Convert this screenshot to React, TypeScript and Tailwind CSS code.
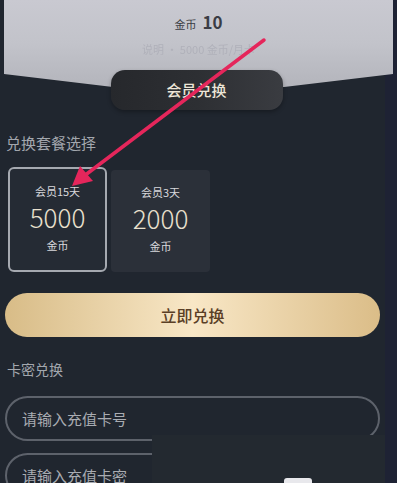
const plans = [
  { name: '会员15天', price: '5000', selected: true },
  { name: '会员3天', price: '2000', selected: false },
]

const App = () => {
  return (
    <div
      className="relative h-[483px] w-full overflow-hidden bg-[#20262f] text-white"
      style={{ fontFamily: '"Noto Sans CJK SC", "Noto Sans", sans-serif' }}
    >
      <div className="absolute inset-y-0 right-0 w-[12px] bg-[#1e2234]" />

      <section className="relative">
        <div className="mx-[4px] h-[88px] bg-gradient-to-b from-[#c9c9d1] via-[#c2c3ca] to-[#b3b4bb] [clip-path:polygon(0_0,100%_0,100%_74px,72%_87px,28%_87px,0_74px)]">
          <div className="flex flex-col items-center pt-[9px]">
            <p className="flex items-baseline gap-[6px] text-[#3a3c44]">
              <span className="text-[11px]">金币</span>
              <span className="text-[17px] font-bold">10</span>
            </p>
            <p className="mt-[6px] text-[11px] text-[#b0b1ba] blur-[0.6px]">说明 · 5000 金币/月卡</p>
          </div>
        </div>
        <div className="relative -mt-[18px] flex justify-center pr-[4px]">
          <div className="flex h-[40px] w-[172px] items-center justify-center rounded-[14px] bg-gradient-to-r from-[#26282c] via-[#2d2f33] to-[#3a3c41] shadow-[0_2px_4px_rgba(0,0,0,0.3)]">
            <span className="text-[15px] font-medium text-[#ede6d8]">会员兑换</span>
          </div>
        </div>
      </section>

      <section className="px-[6px] pt-[22px]">
        <h2 className="text-[15px] text-[#a3a7ae]">兑换套餐选择</h2>
        <div className="mt-[12px] flex gap-[4px] pl-[2px]">
          {plans.map((plan) => (
            <div
              key={plan.price}
              className={
                plan.selected
                  ? 'flex h-[105px] w-[99px] flex-col items-center rounded-[6px] border-2 border-[#a5a9b0] bg-[#252b34] pt-[14px]'
                  : 'mt-[3px] flex h-[102px] w-[99px] flex-col items-center rounded-[4px] bg-[#2b3039] pt-[14px]'
              }
            >
              <span className="text-[11px] text-[#d8d8dc]">{plan.name}</span>
              <span className="mt-[1px] text-[26px] font-light leading-[34px] text-[#e9e0cd]">{plan.price}</span>
              <span className="mt-[3px] text-[11px] text-[#d8d8dc]">金币</span>
            </div>
          ))}
        </div>
      </section>

      <div className="px-[5px] pr-[17px] pt-[21px]">
        <button
          type="button"
          className="flex h-[44px] w-full items-center justify-center rounded-full bg-gradient-to-r from-[#d8bc87] via-[#f8e7c6] to-[#dbbd88] text-[16px] font-medium text-[#5b4026]"
        >
          立即兑换
        </button>
      </div>

      <section className="px-[5px] pr-[17px] pt-[22px]">
        <h2 className="pl-[2px] text-[14px] text-[#a3a7ae]">卡密兑换</h2>
        <div className="mt-[16px] flex flex-col gap-[12px]">
          <input
            placeholder="请输入充值卡号"
            className="h-[45px] w-full rounded-full border-2 border-[#5d626b] bg-transparent px-[15px] text-[15px] text-white placeholder:text-[#a9acb2] focus:outline-none"
          />
          <input
            placeholder="请输入充值卡密"
            className="h-[45px] w-full rounded-full border-2 border-[#5d626b] bg-transparent px-[15px] text-[15px] text-white placeholder:text-[#a9acb2] focus:outline-none"
          />
        </div>
      </section>

      <div className="absolute bottom-0 left-[152px] h-[48px] w-[233px] bg-[#232930]">
        <div className="absolute bottom-0 left-[132px] h-[5px] w-[28px] rounded-t-[3px] bg-[#e8e8ec]" />
      </div>

      <svg className="pointer-events-none absolute left-0 top-0" width="397" height="483" viewBox="0 0 397 483">
        <line x1="264" y1="40" x2="84" y2="176" stroke="#e5265b" strokeWidth="3.5" strokeLinecap="round" />
        <path d="M72 186 L80 166 L93 181 Z" fill="#e5265b" />
      </svg>
    </div>
  )
}

export default App
